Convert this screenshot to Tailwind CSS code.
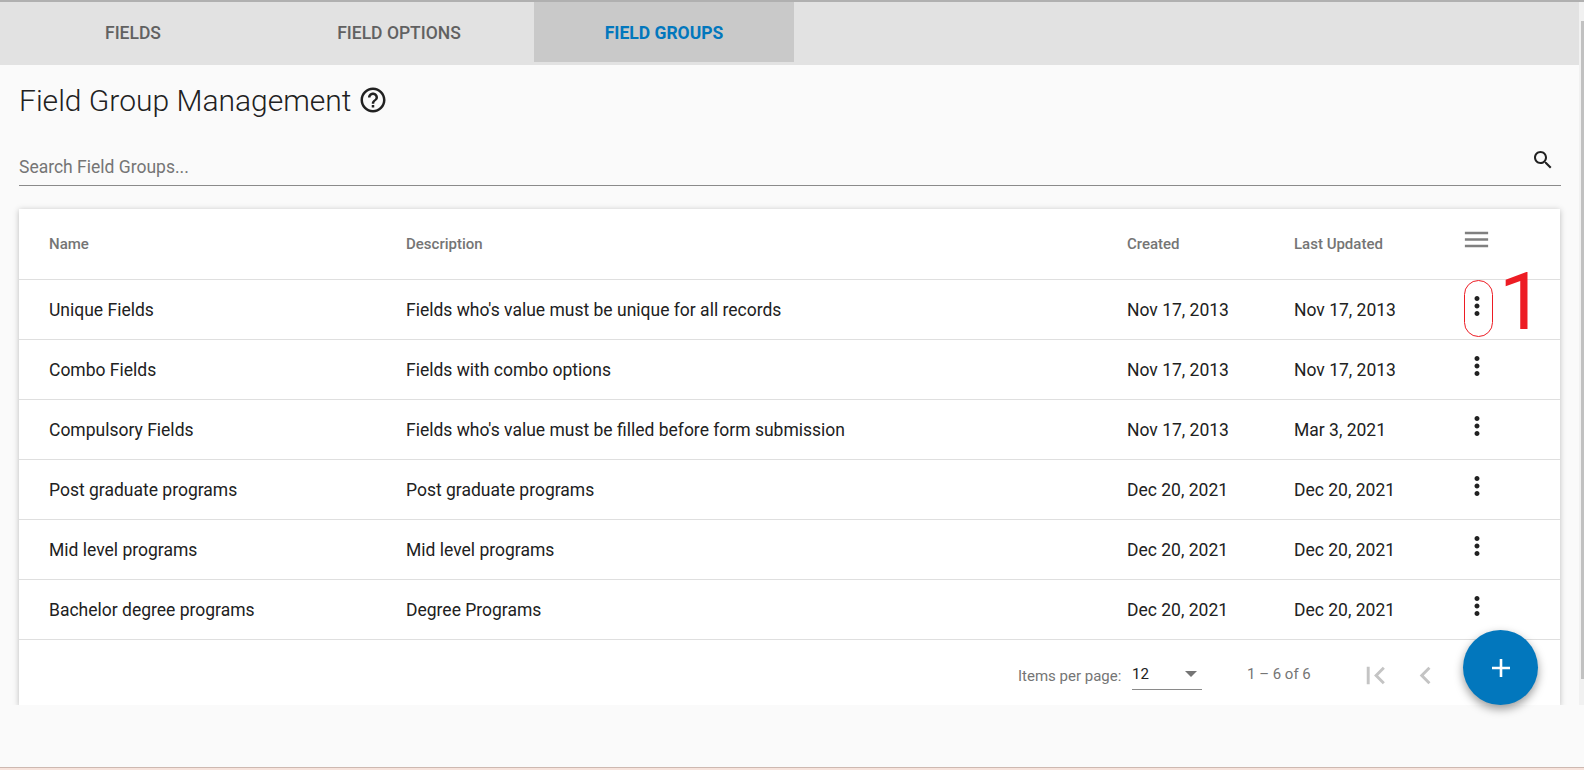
<!DOCTYPE html>
<html lang="en">
<head>
    <meta charset="UTF-8">
    <title>Field Group Management</title>
    <script src="https://cdn.jsdelivr.net/npm/@tailwindcss/browser@4"></script>
</head>
<body class="relative h-[770px] overflow-hidden bg-[#fafafa] font-['Roboto',sans-serif] text-[#212121]">
    <div class="h-[2px] bg-[#b0b0b0]"></div>

    <div class="h-[703px] overflow-hidden flex">
        <div class="w-[1579px] shrink-0">
            <!-- Tabs -->
            <nav class="h-[63px] bg-[#e2e2e2] flex text-[17.5px] font-medium uppercase text-[#616161]">
                <a class="w-[266px] h-[60px] pt-[2px] flex items-center justify-center">Fields</a>
                <a class="w-[266px] h-[60px] pt-[2px] flex items-center justify-center">Field Options</a>
                <a class="w-[260px] ml-[2px] h-[60px] pt-[2px] flex items-center justify-center bg-[#c9c9c9] text-[#0277bd] font-bold">Field Groups</a>
            </nav>

            <div class="pl-[19px] pr-[18px]">
                <div class="h-[68px] pt-[2px] flex items-center gap-[7px]">
                    <h1 class="text-[30px] font-light text-[#212121]">Field Group Management</h1>
                    <svg class="w-[30px] h-[30px]" viewBox="0 0 24 24" fill="#212121"><path d="M11 18h2v-2h-2v2zm1-16C6.48 2 2 6.48 2 12s4.48 10 10 10 10-4.48 10-10S17.52 2 12 2zm0 18c-4.41 0-8-3.59-8-8s3.59-8 8-8 8 3.59 8 8-3.59 8-8 8zm0-14c-2.21 0-4 1.79-4 4h2c0-1.1.9-2 2-2s2 .9 2 2c0 2-3 1.75-3 5h2c0-2.25 3-2.5 3-5 0-2.21-1.79-4-4-4z"/></svg>
                </div>

                <!-- Search -->
                <div class="mt-[14px] h-[39px] w-[1542px] border-b border-[#8a8a8a] flex items-end justify-between pb-[5px]">
                    <span class="text-[17.5px] text-[#757575]">Search Field Groups...</span>
                    <svg class="w-6 h-6 mr-[6px] mb-[8px]" viewBox="0 0 24 24" fill="#212121"><path d="M15.5 14h-.79l-.28-.27C15.41 12.59 16 11.11 16 9.5 16 5.91 13.09 3 9.5 3S3 5.91 3 9.5 5.91 16 9.5 16c1.61 0 3.09-.59 4.23-1.57l.27.28v.79l5 4.99L20.49 19l-4.99-5zm-6 0C7.01 14 5 11.99 5 9.5S7.01 5 9.5 5 14 7.01 14 9.5 11.99 14 9.5 14z"/></svg>
                </div>

                <!-- Card -->
                <div class="mt-[23px] w-[1541px] bg-white shadow-[0_1px_6px_rgba(0,0,0,0.25)]">
                    <table class="w-full table-fixed text-left text-[17.5px]">
                        <colgroup>
                            <col class="w-[387px]">
                            <col class="w-[721px]">
                            <col class="w-[167px]">
                            <col class="w-[171px]">
                            <col>
                        </colgroup>
                        <thead class="text-[15px] text-[#757575]">
                            <tr class="h-[70px] border-b border-[#dfdfdf]">
                                <th class="pl-[30px] font-medium">Name</th>
                                <th class="font-medium">Description</th>
                                <th class="font-medium">Created</th>
                                <th class="font-medium">Last Updated</th>
                                <th>
                                    <svg class="w-[31px] h-[31px] -ml-[4px] -mt-[8px]" viewBox="0 0 24 24" fill="#808080"><path d="M3 18h18v-2H3v2zm0-5h18v-2H3v2zm0-7v2h18V6H3z"/></svg>
                                </th>
                            </tr>
                        </thead>
                        <tbody>
                            <tr class="h-[60px] border-b border-[#dfdfdf]">
                                <td class="pl-[30px] pt-[3px]">Unique Fields</td>
                                <td class="pt-[3px]">Fields who's value must be unique for all records</td>
                                <td class="pt-[3px]">Nov 17, 2013</td>
                                <td class="pt-[3px]">Nov 17, 2013</td>
                                <td><svg class="w-[30px] h-[30px] -ml-[3px] -mt-[6px]" viewBox="0 0 24 24" fill="#212121"><path d="M12 8c1.1 0 2-.9 2-2s-.9-2-2-2-2 .9-2 2 .9 2 2 2zm0 2c-1.1 0-2 .9-2 2s.9 2 2 2 2-.9 2-2-.9-2-2-2zm0 6c-1.1 0-2 .9-2 2s.9 2 2 2 2-.9 2-2-.9-2-2-2z"/></svg></td>
                            </tr>
                            <tr class="h-[60px] border-b border-[#dfdfdf]">
                                <td class="pl-[30px] pt-[3px]">Combo Fields</td>
                                <td class="pt-[3px]">Fields with combo options</td>
                                <td class="pt-[3px]">Nov 17, 2013</td>
                                <td class="pt-[3px]">Nov 17, 2013</td>
                                <td><svg class="w-[30px] h-[30px] -ml-[3px] -mt-[6px]" viewBox="0 0 24 24" fill="#212121"><path d="M12 8c1.1 0 2-.9 2-2s-.9-2-2-2-2 .9-2 2 .9 2 2 2zm0 2c-1.1 0-2 .9-2 2s.9 2 2 2 2-.9 2-2-.9-2-2-2zm0 6c-1.1 0-2 .9-2 2s.9 2 2 2 2-.9 2-2-.9-2-2-2z"/></svg></td>
                            </tr>
                            <tr class="h-[60px] border-b border-[#dfdfdf]">
                                <td class="pl-[30px] pt-[3px]">Compulsory Fields</td>
                                <td class="pt-[3px]">Fields who's value must be filled before form submission</td>
                                <td class="pt-[3px]">Nov 17, 2013</td>
                                <td class="pt-[3px]">Mar 3, 2021</td>
                                <td><svg class="w-[30px] h-[30px] -ml-[3px] -mt-[6px]" viewBox="0 0 24 24" fill="#212121"><path d="M12 8c1.1 0 2-.9 2-2s-.9-2-2-2-2 .9-2 2 .9 2 2 2zm0 2c-1.1 0-2 .9-2 2s.9 2 2 2 2-.9 2-2-.9-2-2-2zm0 6c-1.1 0-2 .9-2 2s.9 2 2 2 2-.9 2-2-.9-2-2-2z"/></svg></td>
                            </tr>
                            <tr class="h-[60px] border-b border-[#dfdfdf]">
                                <td class="pl-[30px] pt-[3px]">Post graduate programs</td>
                                <td class="pt-[3px]">Post graduate programs</td>
                                <td class="pt-[3px]">Dec 20, 2021</td>
                                <td class="pt-[3px]">Dec 20, 2021</td>
                                <td><svg class="w-[30px] h-[30px] -ml-[3px] -mt-[6px]" viewBox="0 0 24 24" fill="#212121"><path d="M12 8c1.1 0 2-.9 2-2s-.9-2-2-2-2 .9-2 2 .9 2 2 2zm0 2c-1.1 0-2 .9-2 2s.9 2 2 2 2-.9 2-2-.9-2-2-2zm0 6c-1.1 0-2 .9-2 2s.9 2 2 2 2-.9 2-2-.9-2-2-2z"/></svg></td>
                            </tr>
                            <tr class="h-[60px] border-b border-[#dfdfdf]">
                                <td class="pl-[30px] pt-[3px]">Mid level programs</td>
                                <td class="pt-[3px]">Mid level programs</td>
                                <td class="pt-[3px]">Dec 20, 2021</td>
                                <td class="pt-[3px]">Dec 20, 2021</td>
                                <td><svg class="w-[30px] h-[30px] -ml-[3px] -mt-[6px]" viewBox="0 0 24 24" fill="#212121"><path d="M12 8c1.1 0 2-.9 2-2s-.9-2-2-2-2 .9-2 2 .9 2 2 2zm0 2c-1.1 0-2 .9-2 2s.9 2 2 2 2-.9 2-2-.9-2-2-2zm0 6c-1.1 0-2 .9-2 2s.9 2 2 2 2-.9 2-2-.9-2-2-2z"/></svg></td>
                            </tr>
                            <tr class="h-[60px] border-b border-[#dfdfdf]">
                                <td class="pl-[30px] pt-[3px]">Bachelor degree programs</td>
                                <td class="pt-[3px]">Degree Programs</td>
                                <td class="pt-[3px]">Dec 20, 2021</td>
                                <td class="pt-[3px]">Dec 20, 2021</td>
                                <td><svg class="w-[30px] h-[30px] -ml-[3px] -mt-[6px]" viewBox="0 0 24 24" fill="#212121"><path d="M12 8c1.1 0 2-.9 2-2s-.9-2-2-2-2 .9-2 2 .9 2 2 2zm0 2c-1.1 0-2 .9-2 2s.9 2 2 2 2-.9 2-2-.9-2-2-2zm0 6c-1.1 0-2 .9-2 2s.9 2 2 2 2-.9 2-2-.9-2-2-2z"/></svg></td>
                            </tr>
                        </tbody>
                    </table>

                    <!-- Paginator -->
                    <div class="h-[66px] flex items-center pl-[999px] text-[15px] text-[#757575]">
                        <span class="w-[114px] mt-[7px]">Items per page:</span>
                        <div class="w-[70px] h-[32px] mt-[2px] border-b border-[#8a8a8a] flex items-center justify-between pr-[5px] text-[#212121]">
                            <span class="pt-[3px]">12</span>
                            <span class="w-0 h-0 mt-[1px] border-x-[6px] border-x-transparent border-t-[6px] border-t-[#757575]"></span>
                        </div>
                        <span class="ml-[45px] w-[90px] mt-[4px]">1 – 6 of 6</span>
                        <svg class="w-[35px] h-[35px] ml-[21px] mt-[6px]" viewBox="0 0 24 24" fill="#c4c4c4"><path d="M18.41 16.59L13.82 12l4.59-4.59L17 6l-6 6 6 6zM6 6h2v12H6z"/></svg>
                        <svg class="w-[35px] h-[35px] ml-[15px] mt-[6px]" viewBox="0 0 24 24" fill="#c4c4c4"><path d="M15.41 7.41L14 6l-6 6 6 6 1.41-1.41L10.83 12z"/></svg>
                    </div>
                </div>
            </div>
        </div>

        <!-- Scrollbar -->
        <div class="w-[5px] bg-[#f1f1f1] pl-[2px]">
            <div class="h-[658px] mt-[19px] bg-[#c1c1c1]"></div>
        </div>
    </div>

    <!-- Page add button -->
    <button class="absolute left-[1463px] top-[630px] w-[75px] h-[75px] rounded-full bg-[#0277bd] shadow-[0_4px_10px_rgba(0,0,0,0.4)] flex items-center justify-center">
        <svg class="w-[18px] h-[18px]" viewBox="0 0 18 18" fill="#fff"><path d="M7.7 0h2.6v7.7H18v2.6h-7.7V18H7.7v-7.7H0V7.7h7.7z"/></svg>
    </button>

    <!-- Red annotation -->
    <div class="absolute left-[1464px] top-[280px] w-[29px] h-[57px] rounded-[15px] border border-[#ed1c24]"></div>
    <span class="absolute left-[1499px] top-[256px] text-[80px] leading-[92px] text-[#ed1c24]">1</span>

    <div class="absolute left-0 right-0 top-[767px] h-[3px] border-t border-[#cdb8b0] bg-[#f7e3dc]"></div>
</body>
</html>
